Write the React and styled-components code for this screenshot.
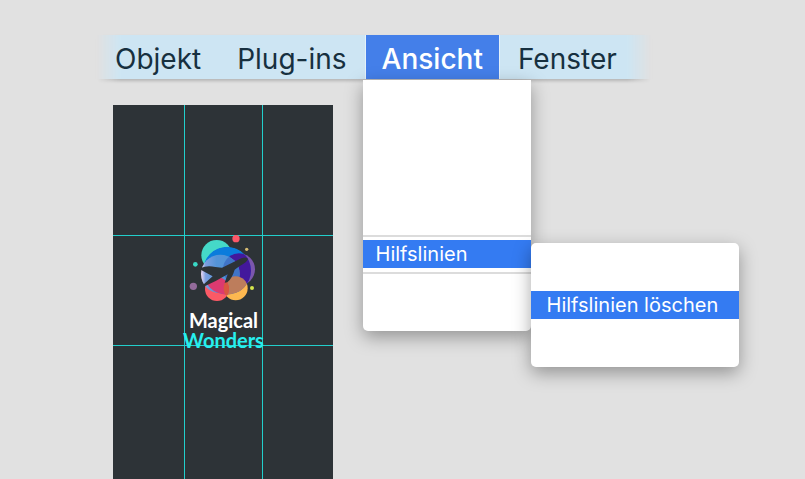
import React from 'react'
import styled, { createGlobalStyle } from 'styled-components'

const GlobalStyle = createGlobalStyle`
  * {
    box-sizing: border-box;
  }

  body {
    margin: 0;
    background-color: #e1e1e1;
    font-family: Inter, "Liberation Sans", sans-serif;
  }
`

const Page = styled.div`
  display: flex;
  flex-direction: column;
  min-height: 100vh;
  padding: 35px 97px 0;
  overflow: hidden;
`

const MenuBar = styled.nav`
  position: relative;
  z-index: 0;
  display: flex;
  align-self: flex-start;
  height: 44px;
  padding-right: 16px;

  &::before {
    content: '';
    position: absolute;
    z-index: -1;
    inset: 0;
    background-color: #cde5f3;
    box-shadow: 0 2px 3px rgba(0, 0, 0, 0.2);
    mask-image: linear-gradient(to right, transparent, #000 24px, #000 calc(100% - 24px), transparent);
    mask-clip: no-clip;
  }
`

const MenuSlot = styled.div`
  position: relative;
  display: flex;
`

const MenuTitle = styled.button`
  padding: 4px ${props => (props.$active ? 16 : 17)}px 0;
  border: 0;
  border-left: 1px solid ${props => (props.$active ? '#e4f1fa' : 'transparent')};
  border-right: 1px solid ${props => (props.$active ? '#e4f1fa' : 'transparent')};
  background-color: ${props => (props.$active ? '#447fe9' : 'transparent')};
  background-clip: padding-box;
  color: ${props => (props.$active ? '#fff' : '#17303f')};
  font-family: inherit;
  font-size: 28px;
  font-weight: ${props => (props.$active ? 500 : 400)};
  line-height: 40px;
`

const Menu = styled.div`
  position: absolute;
  z-index: 1;
  top: 45px;
  left: -2px;
  width: 168px;
  padding: 155px 0 57px;
  border-radius: 0 0 5px 5px;
  background-color: #fff;
  box-shadow: 0 6px 18px rgba(0, 0, 0, 0.35);
`

const Group = styled.div`
  position: relative;
  padding: 3px 0 4px;
  border: 2px solid #dcdcdc;
  border-width: 2px 0;
`

const SubMenu = styled.div`
  position: absolute;
  top: 6px;
  left: 100%;
  width: 208px;
  padding: 48px 0;
  border-radius: 5px;
  background-color: #fff;
  box-shadow: 0 6px 18px rgba(0, 0, 0, 0.35);
`

const MenuItem = styled.button`
  display: block;
  width: 100%;
  padding: 0 ${props => (props.$wide ? 16 : 13)}px;
  border: 0;
  background-color: #347bf2;
  color: #fff;
  font-family: inherit;
  font-size: 20px;
  line-height: 28px;
  text-align: left;
  white-space: nowrap;
`

const Artboard = styled.main`
  display: grid;
  flex: 1;
  grid-template-columns: 72px 78px 70px;
  grid-template-rows: 131px 110px 1fr;
  width: 220px;
  margin: 26px 0 0 16px;
  background-color: #2d3337;
`

const Cell = styled.div`
  border: 0 solid #22cfcc;
  border-right-width: ${props => (props.$last ? 0 : 1)}px;
  border-bottom-width: ${props => (props.$bottom ? 0 : 1)}px;
`

const Logo = styled.div`
  display: flex;
  flex-direction: column;
  align-items: center;

  svg {
    overflow: visible;
  }
`

const Word = styled.span`
  color: ${props => props.$color};
  font-family: Lato, "Open Sans", sans-serif;
  font-size: 20px;
  font-weight: 700;
  line-height: 20px;
`

const Emblem = () => (
  <svg width="75" height="74" viewBox="0 12 225 222" aria-hidden="true">
    <defs>
      <clipPath id="big"><circle cx="123" cy="116" r="72" /></clipPath>
      <clipPath id="sky"><circle cx="103" cy="126" r="58" /></clipPath>
      <clipPath id="yellow"><circle cx="149" cy="169" r="36" /></clipPath>
      <linearGradient id="haze">
        <stop offset="0" stopColor="#f3dcf5" />
        <stop offset="0.12" stopColor="#7d9fe0" />
        <stop offset="0.4" stopColor="#5494d8" />
        <stop offset="1" stopColor="#4f93d8" />
      </linearGradient>
    </defs>
    <circle cx="92" cy="70" r="46" fill="#45d9c8" />
    <circle cx="159" cy="112" r="48" fill="#7b56ad" />
    <circle cx="93" cy="171" r="36" fill="#fb5a66" />
    <circle cx="149" cy="169" r="36" fill="#fdb850" />
    <g clipPath="url(#big)">
      <circle cx="123" cy="116" r="72" fill="#0b7cdc" />
      <circle cx="159" cy="112" r="48" fill="#43189c" />
    </g>
    <circle cx="103" cy="126" r="58" fill="url(#haze)" />
    <g clipPath="url(#sky)">
      <circle cx="159" cy="112" r="48" fill="#3f74c8" />
    </g>
    <g clipPath="url(#big)">
      <circle cx="149" cy="169" r="36" fill="#bd7d5c" />
      <circle cx="93" cy="171" r="36" fill="#dc3a70" />
    </g>
    <circle cx="93" cy="171" r="36" fill="#d9573f" clipPath="url(#yellow)" />
    <path d="M44 108 Q64 99 88 105 L108 107 L166 79 Q182 73 186 81 Q183 91 160 103 L146 113 Q138 140 124 151 L116 152 L125 127 Q92 147 56 163 L50 160 L80 133 L44 113 Z" fill="#2d3337" />
    <circle cx="150" cy="20" r="11" fill="#fb5768" />
    <circle cx="182" cy="52" r="5" fill="#d6bc73" />
    <circle cx="28" cy="97" r="7" fill="#39d9c6" />
    <circle cx="22" cy="163" r="11" fill="#936b9b" />
    <circle cx="198" cy="168" r="6" fill="#d5e74c" />
  </svg>
)

const App = () => (
  <>
    <GlobalStyle />
    <Page>
      <MenuBar>
        <MenuTitle type="button">Objekt</MenuTitle>
        <MenuTitle type="button">Plug-ins</MenuTitle>
        <MenuSlot>
          <MenuTitle type="button" $active aria-expanded="true">Ansicht</MenuTitle>
          <Menu>
            <Group>
              <MenuItem type="button" aria-expanded="true">Hilfslinien</MenuItem>
              <SubMenu>
                <MenuItem type="button" $wide>Hilfslinien löschen</MenuItem>
              </SubMenu>
            </Group>
          </Menu>
        </MenuSlot>
        <MenuTitle type="button">Fenster</MenuTitle>
      </MenuBar>
      <Artboard>
        <Cell />
        <Cell />
        <Cell $last />
        <Cell />
        <Cell>
          <Logo>
            <Emblem />
            <Word $color="#fff">Magical</Word>
            <Word $color="#27efee">Wonders</Word>
          </Logo>
        </Cell>
        <Cell $last />
        <Cell $bottom />
        <Cell $bottom />
        <Cell $last $bottom />
      </Artboard>
    </Page>
  </>
)

export default App
